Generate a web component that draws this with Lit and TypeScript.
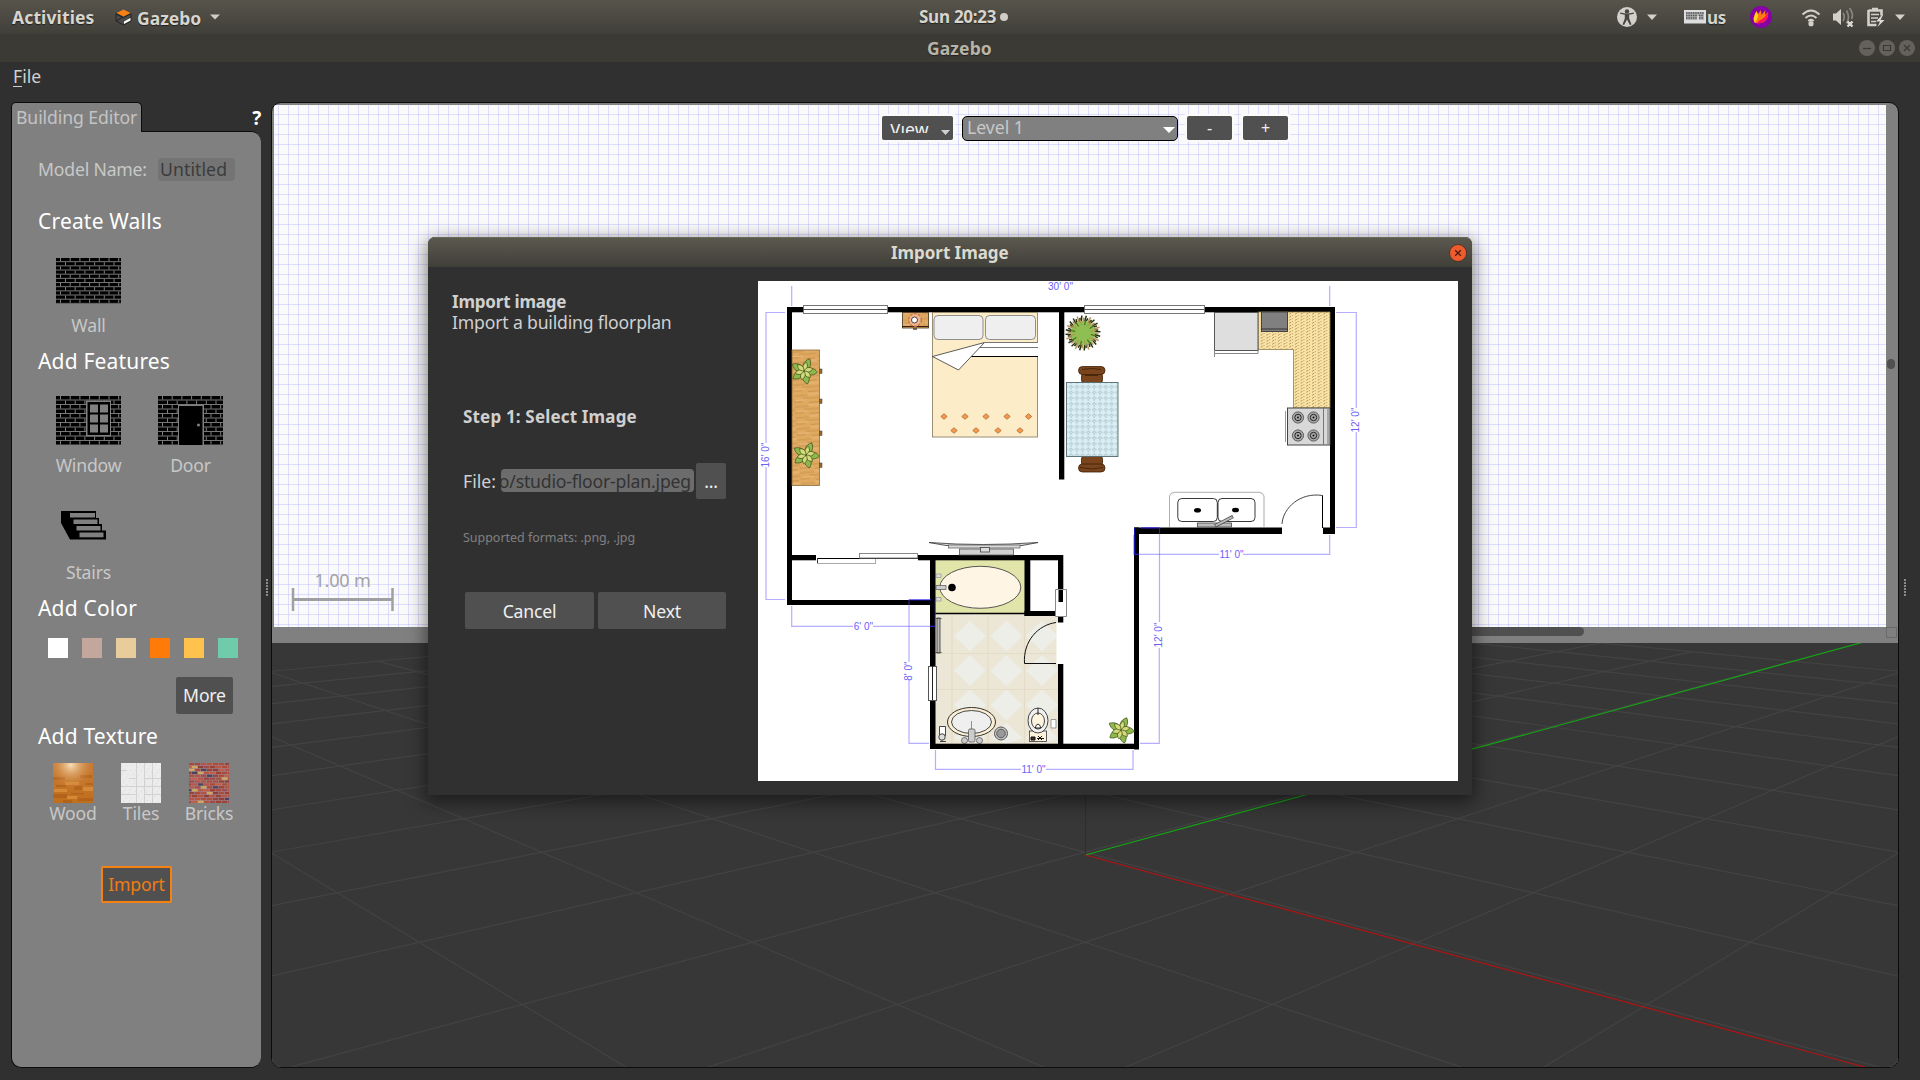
import { LitElement, html, svg, css } from "lit";
import { customElement } from "lit/decorators.js";

const COLORS = ["#ffffff", "#c4a79c", "#e9cc9b", "#ff7b08", "#ffc24d", "#6fcbaa"];

/* ---------- brick icons ---------- */
const bricks = (h: number, rowH: number) => {
  const out = [];
  let r = 0;
  for (let y = 0; y < h; y += rowH, r++) {
    out.push(svg`<path d="M0 ${y + rowH - 0.5}H65" stroke="#777" stroke-width="1"/>`);
    for (let x = r % 2 ? 9.5 : 4.5; x < 65; x += 9.7) {
      out.push(svg`<path d="M${x} ${y}V${y + rowH - 1}" stroke="#808080" stroke-width="1"/>`);
    }
  }
  return out;
};

const wallIcon = html`<svg width="65" height="47" viewBox="0 0 65 47">
  <rect width="65" height="46" fill="#000" />${bricks(45, 4.17)}
</svg>`;

const windowIcon = html`<svg width="65" height="49" viewBox="0 0 65 49">
  <rect width="65" height="49" fill="#000" />${bricks(48, 4.5)}
  <rect x="30" y="4.5" width="25" height="36" fill="#808080" />
  <rect x="31.5" y="6" width="22.5" height="33" fill="#000" />
  ${[8.5, 18.5, 28.5].map((y) => [34, 44].map((x) => svg`<rect x=${x} y=${y} width="8" height="8" fill="#808080"/>`))}
</svg>`;

const doorIcon = html`<svg width="65" height="49" viewBox="0 0 65 49">
  <rect width="65" height="49" fill="#000" />${bricks(48, 4.5)}
  <rect x="20" y="9" width="26" height="40" fill="#808080" />
  <rect x="21" y="10" width="23.5" height="39" fill="#000" />
  <circle cx="40.5" cy="29" r="1.5" fill="#808080" />
</svg>`;

const stairsIcon = html`<svg width="46" height="29" viewBox="0 0 46 29">
  <path d="M0 0H35V7H38V13H41V19.500H45V28.500H9L0 12Z" fill="#000" />
  <g fill="#808080">
    <rect x="9" y="2" width="25" height="4.500" /><rect x="12.500" y="8.500" width="24" height="4.500" />
    <rect x="15.500" y="15" width="24" height="4.500" /><rect x="18.500" y="21.500" width="24" height="4.800" />
  </g>
</svg>`;

/* ---------- texture thumbnails ---------- */
const woodTexture = html`<svg width="40" height="40" viewBox="0 0 40 40">
  <defs>
    <radialGradient id="w" cx="0.45" cy="0.05" r="0.6">
      <stop offset="0" stop-color="#fff0d0" stop-opacity=".85" /><stop offset="1" stop-color="#d08030" stop-opacity="0" />
    </radialGradient>
    <linearGradient id="w2" x1="0" y1="0" x2="0" y2="1"><stop offset="0" stop-color="#c67a35" /><stop offset="1" stop-color="#c06f1c" /></linearGradient>
  </defs>
  <rect width="40" height="40" fill="url(#w2)" />
  <g fill="#a95a16" opacity=".55">
    <rect x="0" y="14" width="12" height="3" /><rect x="27" y="12" width="12" height="3" /><rect x="3" y="22" width="10" height="2" />
    <rect x="21" y="23" width="8" height="4" /><rect x="0" y="31" width="14" height="4" /><rect x="18" y="30" width="13" height="1.500" />
    <rect x="25" y="35" width="15" height="3" /><rect x="10" y="37" width="9" height="3" /><rect x="33" y="20" width="7" height="2" />
  </g>
  <g fill="#e29a45" opacity=".6">
    <rect x="12" y="19" width="14" height="3" /><rect x="30" y="24" width="10" height="4" /><rect x="1" y="26" width="13" height="3" />
    <rect x="14" y="33" width="10" height="3" />
  </g>
  <rect width="40" height="40" fill="url(#w)" />
</svg>`;

const tileSpots = Array.from({ length: 90 }, (_, i) => [(i * 17.3) % 40, (i * 29.7 + 3) % 40]);
const tileTexture = html`<svg width="40" height="40" viewBox="0 0 40 40">
  <rect width="40" height="40" fill="#ececec" />
  ${tileSpots.map(([x, y]) => svg`<rect x=${x} y=${y} width="1" height="1" fill="#d9d9d9"/>`)}
  <path d="M15.500 0V40M23.500 0V40M31.500 0V40M0 23.500H40M8 15.500H16M0 31.500H16M24 15.500H40M24 31.500H40M0 7.500H6" stroke="#d2d2d2" fill="none" />
</svg>`;

const brickTones = ["#a8493a", "#b65848", "#8d3f3c", "#b04a3a", "#9c4c4e", "#c0604a", "#4a4460", "#a8503c", "#b85244", "#a04030", "#cfa860", "#94463e", "#b3543f"];
const brickTexture = html`<svg width="40" height="40" viewBox="0 0 40 40">
  <rect width="40" height="40" fill="#a08690" />
  ${Array.from({ length: 14 }, (_, r) =>
    Array.from({ length: 8 }, (_, c) => {
      const x = c * 6 - (r % 2 ? 3 : 0);
      return svg`<rect x=${x} y=${r * 2.9} width="5.4" height="2.3" fill=${brickTones[(r * 5 + c * 4 + ((r * c) % 3)) % 13]}/>`;
    })
  )}
</svg>`;

/* ---------- floor plan ---------- */
const WALL_RECTS = [
  [787, 307, 548, 5.3], [787, 307, 5, 298], [1330, 307, 5, 227], [1323, 527.5, 12, 6.500], [1134, 527.5, 148, 6.500],
  [1134, 527.5, 5, 222], [930, 743.7, 209, 5.3], [930, 555, 5.5, 194], [791, 555, 25, 5.3], [918, 555, 145, 5.3],
  [787, 600, 144, 5], [1059, 312, 5.300, 167.500], [1058, 555, 5.300, 47], [1058, 616, 5.300, 6.500], [1058, 664, 5.300, 80],
  [1024.500, 560, 5.800, 56], [1024.500, 611, 33, 5],
];

const leafPlant = (x: number, y: number) => svg`<g transform="translate(${x} ${y})" stroke="#42551f" stroke-width=".7">
  ${[25, 95, 165, 235, 300].map((a) => svg`<path transform="rotate(${a})" d="M0 0C4 -3 5 -9 0 -13.500C-5 -9 -4 -3 0 0Z" fill="#8db84c"/>`)}
  ${[0, 60, 120, 180, 240, 300].map((a) => svg`<path transform="rotate(${a + 15})" d="M0 0C3 -3 3 -6 0 -9C-3 -6 -3 -3 0 0Z" fill="#d5db7a"/>`)}
</g>`;

const spikyPlant = svg`<g transform="translate(1083 333)">
  ${Array.from({ length: 48 }, (_, i) => {
    const a = (i * Math.PI) / 24;
    const r0 = 8 + (i % 3) * 2;
    const r1 = 15.500 + (i % 2) * 2;
    return svg`<path d="M${r0 * Math.cos(a)} ${r0 * Math.sin(a)}L${r1 * Math.cos(a + 0.06)} ${r1 * Math.sin(a + 0.06)}" stroke=${i % 3 ? "#26300f" : "#b79250"} stroke-width="1.5"/>`;
  })}
  <circle r="12" fill="#8fbf52"/>
  ${Array.from({ length: 16 }, (_, i) => {
    const a = (i * Math.PI) / 8 + 0.2;
    return svg`<path d="M${8 * Math.cos(a)} ${8 * Math.sin(a)}L${13.500 * Math.cos(a)} ${13.500 * Math.sin(a)}" stroke=${i % 2 ? "#b79250" : "#4b6a22"} stroke-width="1.1"/>`;
  })}
</g>`;

const burner = (x: number, y: number) => svg`<circle cx=${x} cy=${y} r="5.6" fill="#a9a9a9" stroke="#444" stroke-width=".8"/>
  <circle cx=${x} cy=${y} r="3.2" fill="none" stroke="#222" stroke-width="1"/><circle cx=${x} cy=${y} r="1" fill="#111"/>`;

const topWindow = (x: number, w: number) => svg`<rect x=${x + 0.5} y="305.5" width=${w} height="8" fill="#fff" stroke="#777"/>
  <path d="M${x} 309.500h${w}" stroke="#555"/>`;

const floorPlan = html`<svg class="plan" width="700" height="500" viewBox="758 281 700 500">
  <defs>
    <pattern id="grain" width="27" height="11" patternUnits="userSpaceOnUse" patternTransform="rotate(-5)">
      <rect width="27" height="11" fill="#dfa962" />
      <path d="M0 2h14M9 5h18M0 8h9M15 9.500h10" stroke="#b97a34" stroke-width=".7" opacity=".7" />
      <path d="M14 1h12M2 6.500h11" stroke="#eec288" stroke-width=".7" />
    </pattern>
    <pattern id="counter" width="5.700" height="3" patternUnits="userSpaceOnUse">
      <rect width="5.700" height="3" fill="#fbe3a6" /><path d="M1 2.500l2-1.500M4 .8l1-.6" stroke="#9a7f45" stroke-width=".8" />
    </pattern>
    <pattern id="cloth" x="1066" y="382" width="5.800" height="5.700" patternUnits="userSpaceOnUse">
      <rect width="5.800" height="5.700" fill="#d9eff5" /><path d="M5 0V5.700M0 4.800H5.800" stroke="#6b8690" stroke-width=".55" stroke-dasharray="1.6 1.3" />
    </pattern>
  </defs>
  <rect x="758" y="281" width="700" height="500" fill="#fff" />

  <!-- bathroom -->
  <rect x="935" y="560" width="90" height="53" fill="#e1e5aa" />
  <rect x="935" y="614" width="123" height="130" fill="#ebe6d6" />
  ${[636, 670.5, 705, 738].map((y) => [970, 1006.5, 1042].map((x) => svg`<path d="M${x} ${y - 15.500}L${x + 16} ${y}L${x} ${Math.min(y + 15.500, 744)}L${x - 16} ${y}Z" fill="#eeeee8"/>`))}
  <path d="M952 616V744M988 616V744M1024.500 616V744M936 653.500H1058M936 689.500H1058" stroke="#e3dcc6" stroke-width="1.200" />
  <path d="M935 613.500H1025" stroke="#000" stroke-width="1.300" />
  <ellipse cx="980.300" cy="587.300" rx="40.500" ry="21" fill="#fff5e5" stroke="#444" stroke-width=".9" />
  <rect x="936" y="585.500" width="10" height="4" fill="#ccc" stroke="#555" stroke-width=".7" />
  <circle cx="952" cy="587.500" r="3.800" />
  <rect x="936" y="574" width="5" height="3.500" fill="#ddd" stroke="#888" stroke-width=".6" /><rect x="936" y="597.500" width="5" height="3.500" fill="#ddd" stroke="#888" stroke-width=".6" />
  <rect x="937" y="618" width="3" height="35" fill="#bbb" stroke="#333" stroke-width=".8" /><path d="M935.500 618.500h6M935.500 652.500h6" stroke="#555" />
  <ellipse cx="971.500" cy="722" rx="24" ry="14.500" fill="#fbeed2" stroke="#333" stroke-width="1" />
  <ellipse cx="971.500" cy="722" rx="20" ry="11.500" fill="#efefef" stroke="#333" stroke-width=".9" />
  <path d="M971.500 721v8" stroke="#777" stroke-width=".8" />
  <rect x="968.500" y="729" width="6.500" height="13" rx="1.500" fill="#ccc" stroke="#555" stroke-width=".8" />
  <circle cx="964.500" cy="740.500" r="3" fill="#ccc" stroke="#555" stroke-width=".8" /><circle cx="979.500" cy="740.500" r="3" fill="#ccc" stroke="#555" stroke-width=".8" />
  <circle cx="1001" cy="733.500" r="6.500" fill="#c8c8c8" stroke="#555" stroke-width="1" /><circle cx="1001" cy="733.500" r="4.300" fill="#999" stroke="#444" stroke-width=".8" />
  <path d="M939.500 726.500h6v9h-6zM942 735v7M940 741.500h6" fill="#fff" stroke="#333" stroke-width=".9" /><circle cx="942" cy="737" r="3.200" fill="#ddd" stroke="#333" stroke-width=".9" />
  <rect x="1029.500" y="731" width="17" height="10.500" fill="#fdf3da" stroke="#333" stroke-width=".8" />
  <ellipse cx="1038" cy="720.500" rx="10" ry="12.500" fill="#f1f1f1" stroke="#333" stroke-width=".9" />
  <ellipse cx="1038" cy="721" rx="6.500" ry="8" fill="#fff5e0" stroke="#333" stroke-width=".9" />
  <path d="M1038 708v7M1035.500 728c0-5 5-5 5 0z" fill="#fff" stroke="#222" />
  <path d="M1031 737h4v3h-4zM1037 738.500h7M1038 736l4 4M1042 736l-4 4" stroke="#111" fill="#333" stroke-width="1" />
  <path d="M1051 719.500h5v8.500h-5z" fill="#fff" stroke="#999" />
  <path d="M1056 622.500C1038 625 1023 641 1024.500 663.500H1056" fill="none" stroke="#111" stroke-width="1" />
  <rect x="1056.500" y="623" width="8" height="41" fill="#fff" />

  ${WALL_RECTS.map(([x, y, w, h]) => svg`<rect x=${x} y=${y} width=${w} height=${h}/>`)}
  ${topWindow(803, 84)} ${topWindow(1084, 120)}
  <rect x="928.500" y="666.500" width="8" height="34" fill="#fff" stroke="#555" /><path d="M932.500 666V700" stroke="#222" />
  <path d="M1055.500 589.500h11v27h-11z" fill="#fff" stroke="#888" /><rect x="1058.500" y="590" width="4.500" height="12" />
  <rect x="817.500" y="558.500" width="58" height="5" fill="#fff" stroke="#aaa" /><path d="M817 558.500h101" stroke="#000" />
  <rect x="859.500" y="553.500" width="58" height="4.500" fill="#fff" stroke="#888" /><path d="M817.500 558v5" stroke="#333" />

  <!-- bedroom -->
  <rect x="792" y="350" width="27.500" height="135.500" fill="url(#grain)" stroke="#8a6a3c" stroke-width=".8" />
  ${[371, 401, 433, 465].map((y) => svg`<rect x="819.500" y=${y - 2} width="2.500" height="4.500" fill="#96662c" stroke="#443" stroke-width=".5"/>`)}
  ${leafPlant(804, 371)} ${leafPlant(806, 455)} ${leafPlant(1121, 730)}
  <rect x="902.500" y="312.500" width="26" height="15.500" fill="url(#grain)" stroke="#443018" stroke-width=".8" /><path d="M902 326.500h27" stroke="#332010" />
  <circle cx="915" cy="320" r="6.300" fill="#f3b58c" stroke="#c07a54" stroke-width="1.500" stroke-dasharray="2.500 1.500" /><circle cx="914.500" cy="320" r="3" fill="#fff" stroke="#333" stroke-width=".9" />
  <rect x="913" y="328" width="4" height="1.800" fill="#654" />
  <rect x="932.500" y="312.500" width="105" height="124.500" fill="#fcedc8" stroke="#8f8468" stroke-width=".9" />
  <rect x="934" y="315.500" width="49" height="24" rx="4" fill="#efefef" stroke="#666" stroke-width=".7" /><rect x="985.500" y="315.500" width="50" height="24" rx="4" fill="#efefef" stroke="#666" stroke-width=".7" />
  <path d="M985 342.500H1038V356.500H971Z" fill="#fff" /><path d="M985 342.500h53M979 347.500h59" stroke="#777" /><path d="M971 356.500h67" stroke="#000" />
  <path d="M932.500 356.500L984.500 342.500L958.500 370Z" fill="#fff" stroke="#333" stroke-width=".8" />
  ${[[944, 416.500], [965, 416.500], [986, 416.500], [1007, 416.500], [1028.500, 416.500], [954, 430.500], [976, 430.500], [998, 430.500], [1020, 430.500]].map(
    ([x, y]) => svg`<path d="M${x - 3.200} ${y}l3.200-2.800 3.200 2.800-3.200 2.800z" fill="#f59a4c" stroke="#a85a24" stroke-width=".7"/>`)}
  <path d="M929 542.500q54 4 109 0l-16 3h-76z" fill="#ddd" stroke="#333" stroke-width=".8" />
  <rect x="948.500" y="545" width="71.500" height="3" fill="#d8d8d8" stroke="#555" stroke-width=".7" /><rect x="959.500" y="549" width="54" height="6" fill="#d0d0d0" stroke="#555" stroke-width=".8" />
  <rect x="980.500" y="547.500" width="9" height="4.500" fill="#ddd" stroke="#444" stroke-width=".8" />

  <!-- dining and kitchen -->
  ${spikyPlant}
  <g fill="#7a451d" stroke="#3c1e08" stroke-width=".8">
    <rect x="1081.500" y="373" width="21" height="10" rx="3" /><rect x="1078.500" y="366.500" width="26.500" height="8" rx="4" /><path d="M1082 369.500q9.500-2 19 0M1085 375.500h13" fill="none" />
    <rect x="1081.500" y="456" width="21" height="10" rx="3" /><rect x="1078.500" y="464" width="26.500" height="8" rx="4" /><path d="M1080 467.500q11.500 3 23 0" fill="none" />
  </g>
  <rect x="1066.500" y="382.500" width="51.500" height="74" fill="url(#cloth)" stroke="#546870" stroke-width=".9" />
  <path d="M1258 312H1330V408H1293.500V349.500H1258Z" fill="url(#counter)" stroke="#8f7d4d" stroke-width=".8" />
  <rect x="1214.500" y="312.500" width="43.500" height="38" fill="#dedede" stroke="#555" /><path d="M1214.500 350v7M1214 353.500h44v-3" stroke="#888" fill="none" />
  <rect x="1261.500" y="312" width="26" height="19.500" fill="#808080" stroke="#444" /><path d="M1261 329h27" stroke="#333" />
  <rect x="1287.500" y="408" width="42.500" height="37" fill="#d8d8d8" stroke="#444" /><path d="M1323.500 408v37M1328 409v35" stroke="#777" /><path d="M1285.500 411v31" stroke="#999" />
  ${burner(1298, 417.500)} ${burner(1313.500, 417.500)} ${burner(1298, 435.500)} ${burner(1313.500, 435.500)}
  <path d="M1169.500 527V496q1-3.500 5-3.700H1259q4 .2 5 3.700v31" fill="none" stroke="#888" stroke-width=".7" />
  <rect x="1177.800" y="498.500" width="39.500" height="23" rx="4" fill="#fff" stroke="#222" stroke-width=".9" /><rect x="1218" y="498.500" width="37" height="23" rx="4" fill="#fff" stroke="#222" stroke-width=".9" />
  <ellipse cx="1197.500" cy="510.300" rx="3.500" ry="2.300" /><ellipse cx="1235.500" cy="510" rx="3.500" ry="2.300" />
  <rect x="1197.500" y="523" width="34" height="4" fill="#bbb" stroke="#444" stroke-width=".8" /><path d="M1215 526L1233 516.500" stroke="#444" stroke-width="3.400" /><path d="M1215.500 525.700L1232.500 516.800" stroke="#bbb" stroke-width="2" />
  <path d="M1282 524C1283 508 1300 492 1322.500 495.500" fill="none" stroke="#333" stroke-width=".9" /><path d="M1322.500 495.500V528" stroke="#000" />

  <!-- dimensions -->
  <g fill="none" stroke="#5a4cff" stroke-opacity=".45" stroke-width="1.200">
    <path d="M791.700 286V306M1329.700 286V306" />
    <path d="M785 312.500H766V443M766 467V599.500H785" />
    <path d="M1336 312.500H1356.300V408M1356.300 432V527.500H1336" />
    <path d="M1133.700 535V554.300H1219M1243 554.300H1329.700V535" />
    <path d="M1141 527.700H1159.500V622M1159.300 648V743.300H1140" />
    <path d="M791.700 606V626.300H853M873 626.300H935.300V600" />
    <path d="M931 599.500H909V662M909 680V743.300H929" />
    <path d="M935.500 750V769.300H1021M1046 769.300H1133V750" />
  </g>
  <path d="M930 626.300h5M1134 554.300h5M1134.500 528v26M909 600h22M1141 528h18.500v6" stroke="#2018d8" stroke-width="1" fill="none" opacity=".8" />
  <g class="dim">
    <text x="1060.500" y="289.500">30' 0"</text>
    <text transform="translate(768.500 455) rotate(-90)">16' 0"</text>
    <text transform="translate(1359 420) rotate(-90)">12' 0"</text>
    <text x="1231.500" y="558">11' 0"</text>
    <text transform="translate(1162 635) rotate(-90)">12' 0"</text>
    <text x="863.500" y="629.500">6' 0"</text>
    <text transform="translate(911.500 671) rotate(-90)">8' 0"</text>
    <text x="1033.500" y="773">11' 0"</text>
  </g>
</svg>`;

/* ---------- ground grid ---------- */
const project = (i: number, j: number) => {
  const s = 1 / (0.0036832 - 0.000339 * (i + j));
  return [1084.8 + (s * (i - j)) / 2, 853.3 + 1.469 * (s - 271.5)];
};
const gridLines = () => {
  const out = [];
  for (let k = -10; k <= 10; k++) {
    const far = Math.min(10, 9 - k);
    const [ax, ay] = project(k, -10);
    const [bx, by] = project(k, far);
    const [cx, cy] = project(-10, k);
    const [dx, dy] = project(far, k);
    out.push(svg`<path d="M${ax} ${ay}L${bx} ${by}M${cx} ${cy}L${dx} ${dy}"/>`);
  }
  return out;
};

const caret = html`<svg class="caret" width="10" height="6" viewBox="0 0 10 6"><path d="M0 .5H10L5 5.500Z" fill="#cfccc5" /></svg>`;

@customElement("app-root")
export class AppRoot extends LitElement {
  static styles = css`
    :host { display: block; width: 1920px; height: 1080px; overflow: hidden; }
    * { box-sizing: border-box; }
    svg { display: block; flex: none; }
    .screen { width: 1920px; height: 1080px; background: #303030; position: relative; display: flex; flex-direction: column; overflow: hidden;
      font: 17.6px/24px "Noto Sans", "Open Sans", sans-serif; letter-spacing: -0.17px; color: #cfcfcf; white-space: nowrap; }
    .bold { font-weight: 700; font-size: 17px; letter-spacing: -0.25px; }
    .topbar { height: 34px; background: linear-gradient(#57544b, #403f39); display: grid; grid-template-columns: 919px 1fr auto; align-items: center; color: #d8d5ce; text-shadow: 0 1px 1px #222; }
    .top-left { display: flex; align-items: center; padding-left: 12px; }
    .activities { width: 103px; font-size: 17.5px; letter-spacing: 0.12px; }
    .app-name { margin: 1px 7px 0 5px; width: 66px; font-size: 17.5px; letter-spacing: 0; }
    .clock { display: flex; align-items: center; }
    .clock-dot { width: 8px; height: 8px; border-radius: 50%; background: #d0cdc6; margin-left: 4px; }
    .tray { display: flex; align-items: center; padding-right: 13px; }
    .titlebar { height: 28px; background: #3c3a35; display: grid; grid-template-columns: 927px 1fr auto; align-items: center; color: #b8b5a8; text-shadow: 0 1px 1px #222; }
    .title-text { grid-column: 2; font-size: 17.5px; letter-spacing: 0.1px; }
    .win-buttons { display: flex; gap: 4px; padding-right: 5px; }
    .menubar { height: 40px; padding: 2px 0 0 13px; color: #d0d0d0; letter-spacing: 0.05px; }
    .mnemonic { border-bottom: 1px solid #d0d0d0; display: inline-block; height: 23px; line-height: 24px; }
    .workspace { height: 966px; display: flex; padding-left: 11px; }
    .left { width: 250px; display: flex; flex-direction: column; }
    .tab-row { height: 29px; display: flex; justify-content: space-between; }
    .tab { width: 131px; height: 30px; background: #808080; border: 1px solid #0c0c0c; border-bottom: 0; border-radius: 5px 5px 0 0; padding: 2px 0 0 4px; color: #c4c4c4; z-index: 1; letter-spacing: -0.08px; }
    .help { color: #fff; padding: 4px 0 0 0; font-size: 19px; }
    .panel { height: 937px; background: #808080; border: 1px solid #0c0c0c; border-right: 0; border-radius: 0 10px 10px 10px; padding: 24px 0 0 26px; display: flex; flex-direction: column; color: #c8c8c8; }
    .model-row { display: flex; align-items: center; height: 24px; margin-top: 1px; }
    .model-label { width: 120px; }
    .model-field { width: 77px; height: 23px; line-height: 22px; background: #747474; border-radius: 4px; color: #3c3c3c; padding-left: 2px; letter-spacing: 0.1px; }
    h3 { margin: 0; height: 28px; line-height: 28px; font-size: 21px; font-weight: 400; color: #fff; letter-spacing: 0.18px; }
    .tools { display: flex; padding-left: 1px; }
    .tool { width: 102px; display: flex; flex-direction: column; align-items: center; padding-right: 3px; }
    .tool-icon { height: 49px; display: flex; align-items: flex-start; }
    .tool-icon.wall { height: 48px; padding-top: 1px; }
    .tool-icon.short { height: 29px; margin-right: 9px; }
    .tool-label { margin-top: 8px; }
    .tool-label.low { margin-top: 20px; }
    .swatches { display: flex; gap: 14px; padding-left: 10px; margin-top: 16px; }
    .swatch { width: 20px; height: 20px; }
    .btn { background: #505050; color: #f0f0f0; border-radius: 2px; display: flex; align-items: center; justify-content: center; }
    .more { width: 57px; height: 37px; margin: 19px 0 0 138px; padding-bottom: 2px; }
    .textures { display: flex; margin: 13px 0 0 1px; }
    .texture { width: 68px; display: flex; flex-direction: column; align-items: center; color: #c8c8c8; }
    .texture span { margin-top: -2px; }
    .import { width: 71px; height: 37px; border: 2px solid #f58113; color: #f07d14; margin: 41px 0 0 63px; padding-bottom: 2px; }
    .mt26 { margin-top: 26px; } .mt22 { margin-top: 22px; } .mt10 { margin-top: 10px; } .mt21 { margin-top: 21px; } .mt34 { margin-top: 34px; } .mt8 { margin-top: 8px; }
    .splitter { width: 10px; display: flex; justify-content: center; padding: 477px 0 0 0; }
    .splitter.start { padding-left: 2px; }
    .splitter.end { width: 12px; }
    .dots { width: 2px; height: 17px; background: repeating-linear-gradient(#8c8c8c 0 2px, transparent 2px 3px); }
    .right { width: 1628px; height: 966px; border: 1px solid #0c0c0c; border-radius: 10px; background: #808080; overflow: hidden; display: flex; flex-direction: column; }
    .canvas-row { height: 522px; margin: 2px 0 0 2px; display: flex; }
    .editor { width: 1612px; height: 522px; background-color: #fafafa;
      background-image: linear-gradient(90deg, rgba(190,190,255,.48) 1px, transparent 1px), linear-gradient(rgba(190,190,255,.48) 1px, transparent 1px);
      background-size: 10px 10px; background-position: 4px 9px; display: flex; flex-direction: column; justify-content: space-between; }
    .level-bar { display: flex; align-items: center; margin: 9px 0 0 606px; }
    .halo { background: #fafafa; padding: 2px; }
    .view { width: 71px; height: 24px; position: relative; }
    .view-text { height: 9px; width: 44px; overflow: hidden; margin: 1px 15px 0 0; padding-left: 2px; display: flex; align-items: center; letter-spacing: 0; }
    .view-arrow { position: absolute; right: 3px; bottom: 5px; }
    .level { width: 216px; height: 25px; border: 1px solid #000; border-radius: 5px; background: #808080; color: #c8c8c8; margin: 0 7px 0 7px; display: flex; align-items: center; justify-content: space-between; padding: 0 2px 0 4px; }
    .level-name { margin-top: -2px; letter-spacing: 0; }
    .level-arrow { margin-top: 3px; }
    .step { width: 45px; height: 24px; font-size: 16px; }
    .gap { margin-left: 7px; }
    .scale { width: 103px; margin: 0 0 16px 17px; color: #a2a2a6; display: flex; flex-direction: column; align-items: center; }
    .scale-text { line-height: 22px; margin-bottom: -3px; font-size: 18px; }
    .vscroll { width: 12px; padding: 254px 0 0 1px; display: flex; flex-direction: column; }
    .vhandle { width: 8px; height: 10px; border-radius: 4px; background: #505050; }
    .hscroll { height: 17px; display: flex; }
    .hhandle { margin: 0 302px 0 428px; width: 884px; height: 9px; border-radius: 5px; background: #505050; }
    .corner { width: 11px; height: 11px; border: 1px solid #6a6a6a; }
    .scene { width: 1626px; height: 424px; background: #373737; }
    .dialog { position: absolute; left: 428px; top: 237px; width: 1044px; height: 558px; background: #303030; border-radius: 7px 7px 0 0; box-shadow: 0 5px 18px 2px rgba(0,0,0,.5); display: flex; flex-direction: column; }
    .dialog-title { height: 30px; border-radius: 7px 7px 0 0; background: linear-gradient(#5b584e, #403f39); border-top: 1px solid #6b685e; display: grid; grid-template-columns: 463px 1fr auto; align-items: center; color: #dcd9d0; }
    .dialog-title span { grid-column: 2; letter-spacing: -0.05px; }
    .close { margin-right: 5px; }
    .dialog-body { display: flex; padding: 14px 0 0 24px; }
    .form { width: 306px; display: flex; flex-direction: column; color: #d0d0d0; }
    .form-head { margin-top: 10px; line-height: 21px; letter-spacing: -0.2px; }
    .form-sub { line-height: 21px; }
    .form-step { margin: 72px 0 0 11px; letter-spacing: 0.17px; }
    .file-row { display: flex; align-items: center; margin: 33px 0 0 11px; height: 37px; }
    .file-label { width: 38px; letter-spacing: 0.05px; }
    .file-field { width: 193px; height: 23px; border-radius: 4px; background: #6c6c6c; color: #333; overflow: hidden; display: flex; justify-content: flex-end; align-items: center; padding-right: 3px; margin-right: 2px; }
    .browse { width: 30px; height: 36px; }
    .formats { margin: 29px 0 0 11px; font-size: 12.500px; line-height: 20px; color: #808080; letter-spacing: -0.03px; }
    .actions { display: flex; gap: 4px; margin: 44px 0 0 13px; }
    .action { width: 129px; height: 37px; }
    .action.next { width: 128px; }
    .dim { font: 10px "Liberation Sans", sans-serif; fill: #6a62f5; text-anchor: middle; letter-spacing: 0; }
  `;

  render() {
    return html`<div class="screen">
      <div class="topbar">
        <div class="top-left">
          <span class="bold activities">Activities</span>
          <svg width="17" height="17" viewBox="0 0 17 17">
            <path d="M1 4.500L8.500 8.500L16 4.500V12L8.500 16L1 12Z" fill="#4a4a4a" stroke="#242424" /><path d="M1.500 4L8.500 .5L15.500 4L8.500 7.500Z" fill="#f58113" />
            <path d="M1 5l7.500 4M1 12l7-4" stroke="#242424" /><path d="M9 12.500L15.500 9V11.500L9 15Z" fill="#fff" />
          </svg>
          <span class="bold app-name">Gazebo</span>${caret}
        </div>
        <div class="clock"><span class="bold">Sun 20:23</span><span class="clock-dot"></span></div>
        <div class="tray">
          <svg width="292" height="34" viewBox="1615 0 292 34">
            <g fill="#d3d0c9">
              <circle cx="1627" cy="17" r="10" />
              <path d="M1647 14.500h10l-5 5.500zM1895 14.500h10l-5 5.500z" />
            </g>
            <g fill="#47453f"><circle cx="1627" cy="11.500" r="2.200" /><path d="M1620 13.800l4.800 1v3.700l-2.300 6 1.600.6 2.900-5.500 2.900 5.500 1.600-.6-2.300-6v-3.700l4.800-1-.2-1.300-6.800 1.300-6.800-1.300z" /></g>
            <rect x="1684" y="10" width="22" height="13.500" fill="#dedede" /><rect x="1686" y="12" width="18" height="8" fill="#b0b0b0" />
            <path d="M1686 13h18M1686 15.500h11M1686 18h11M1699 15.500h4M1699 18h4" stroke="#555" stroke-width="1.500" stroke-dasharray="1.500 .8" /><path d="M1698 16v4" stroke="#fff" />
            <text x="1707" y="24" class="bold" fill="#d5d2cb">us</text>
            <circle cx="1761" cy="17" r="11" fill="#8700a5" />
            <path d="M1755 23c-3-5 0-8 1.500-12l1.500 3 3-4 .5 5 4-5-.5 5 3-3c1 6-3 11-8 11z" fill="#ff7a10" />
            <path d="M1755 23c-3-5 0-8 1.500-12l1.500 4c0 4-2 5-3 8z" fill="#ffd21a" /><path d="M1757 24c1-5 7-3 11-12 1 7-4 11-11 12z" fill="#ff0f5c" />
            <g fill="none" stroke="#d3d0c9" stroke-width="2.200"><path d="M1802.500 14.500q8.500-8 17 0M1805.500 18q5.500-5 11 0M1808.300 21q2.700-2.200 5.400 0" stroke-width="2" /></g>
            <circle cx="1811" cy="23.700" r="2.600" fill="#d3d0c9" />
            <path d="M1833 13.500h3l5-4.500v16l-5-4.500h-3z" fill="#d3d0c9" />
            <path d="M1843 13q2.500 4 0 8M1846.500 10.500q4 6.500 0 13M1849.500 8q4.500 6 2 11" fill="none" stroke="#89867f" stroke-width="1.700" />
            <path d="M1847.500 21.500l5 5M1852.500 21.500l-5 5" stroke="#e0ddd6" stroke-width="2.400" />
            <path d="M1868.500 10.500h13v5M1868.500 10v15h8M1872 9h6" fill="none" stroke="#d3d0c9" stroke-width="2.600" />
            <path d="M1871 14.500h8M1871 18h7M1871 21.500h5" stroke="#d3d0c9" stroke-width="1.700" />
            <path d="M1882 15l-6 6.500h4l-2.500 5.500 7-7h-4l2.500-5z" fill="#e0ddd6" />
          </svg>
        </div>
      </div>
      <div class="titlebar">
        <span class="bold title-text">Gazebo</span>
        <div class="win-buttons">
          ${["M4 8.500h8", "M4.500 5.500h7v5h-7z", "M5 5l6 6M11 5l-6 6"].map(
            (d) => html`<svg width="16" height="16" viewBox="0 0 16 16"><circle cx="8" cy="8" r="8" fill="#63615a" /><path d=${d} fill="none" stroke="#3a3833" stroke-width="1.200" /></svg>`
          )}
        </div>
      </div>
      <div class="menubar"><span class="mnemonic">F</span>ile</div>

      <div class="workspace">
        <div class="left">
          <div class="tab-row"><div class="tab">Building Editor</div><div class="bold help">?</div></div>
          <div class="panel">
            <div class="model-row"><span class="model-label">Model Name:</span><span class="model-field">Untitled</span></div>
            <h3 class="mt26">Create Walls</h3>
            <div class="tools mt22"><div class="tool"><div class="tool-icon wall">${wallIcon}</div><span class="tool-label">Wall</span></div></div>
            <h3 class="mt10">Add Features</h3>
            <div class="tools mt21">
              <div class="tool"><div class="tool-icon">${windowIcon}</div><span class="tool-label">Window</span></div>
              <div class="tool"><div class="tool-icon">${doorIcon}</div><span class="tool-label">Door</span></div>
            </div>
            <div class="tools mt34"><div class="tool"><div class="tool-icon short">${stairsIcon}</div><span class="tool-label low">Stairs</span></div></div>
            <h3 class="mt10">Add Color</h3>
            <div class="swatches">${COLORS.map((c) => html`<div class="swatch" style="background:${c}"></div>`)}</div>
            <div class="btn more">More</div>
            <h3 class="mt8">Add Texture</h3>
            <div class="textures">
              <div class="texture">${woodTexture}<span>Wood</span></div>
              <div class="texture">${tileTexture}<span>Tiles</span></div>
              <div class="texture">${brickTexture}<span>Bricks</span></div>
            </div>
            <div class="btn import">Import</div>
          </div>
        </div>
        <div class="splitter start"><div class="dots"></div></div>
        <div class="right">
          <div class="canvas-row">
            <div class="editor">
              <div class="level-bar">
                <div class="halo"><div class="btn view"><span class="view-text">View</span><svg class="view-arrow" width="9" height="5" viewBox="0 0 9 5"><path d="M0 0H9L4.500 5Z" fill="#d0d0d0" /></svg></div></div>
                <div class="level"><span class="level-name">Level 1</span><svg class="level-arrow" width="12" height="6" viewBox="0 0 12 6"><path d="M0 0H12L6 6Z" fill="#fff" /></svg></div>
                <div class="halo"><div class="btn step">-</div></div>
                <div class="halo gap"><div class="btn step">+</div></div>
              </div>
              <div class="scale">
                <span class="scale-text">1.00 m</span>
                <svg width="103" height="23" viewBox="0 0 103 23"><path d="M2 0V23M101.500 0V23" stroke="#a0a0a4" stroke-width="2.500" /><path d="M2 11.500H101" stroke="#a0a0a4" stroke-width="3" /></svg>
              </div>
            </div>
            <div class="vscroll"><div class="vhandle"></div></div>
          </div>
          <div class="hscroll"><div class="hhandle"></div><div class="corner"></div></div>
          <svg class="scene" width="1626" height="424" viewBox="272 644 1626 424">
            <g stroke="#434343" stroke-width="1.200" fill="none">${gridLines()}</g>
            <path d="M1085.500 700V856" stroke="#1c1cb4" stroke-width="1" />
            <path d="M1085.500 856L1862 643.500" stroke="#14a814" stroke-width="1.200" />
            <path d="M1085.500 856L1868 1069" stroke="#b01414" stroke-width="1.200" />
          </svg>
        </div>
        <div class="splitter end"><div class="dots"></div></div>
      </div>

      <div class="dialog">
        <div class="dialog-title">
          <span class="bold">Import Image</span>
          <svg class="close" width="18" height="18" viewBox="0 0 18 18"><circle cx="9" cy="9" r="8.500" fill="#ee5b2c" stroke="#3a3020" stroke-width=".8" /><path d="M6.200 6.200l5.600 5.600M11.800 6.200l-5.600 5.600" stroke="#4a1d0c" stroke-width="1.300" /></svg>
        </div>
        <div class="dialog-body">
          <div class="form">
            <span class="bold form-head">Import image</span>
            <span class="form-sub">Import a building floorplan</span>
            <span class="bold form-step">Step 1: Select Image</span>
            <div class="file-row"><span class="file-label">File:</span><span class="file-field">o/studio-floor-plan.jpeg</span><span class="btn browse">...</span></div>
            <span class="formats">Supported formats: .png, .jpg</span>
            <div class="actions"><div class="btn action">Cancel</div><div class="btn action next">Next</div></div>
          </div>
          ${floorPlan}
        </div>
      </div>
    </div>`;
  }
}
